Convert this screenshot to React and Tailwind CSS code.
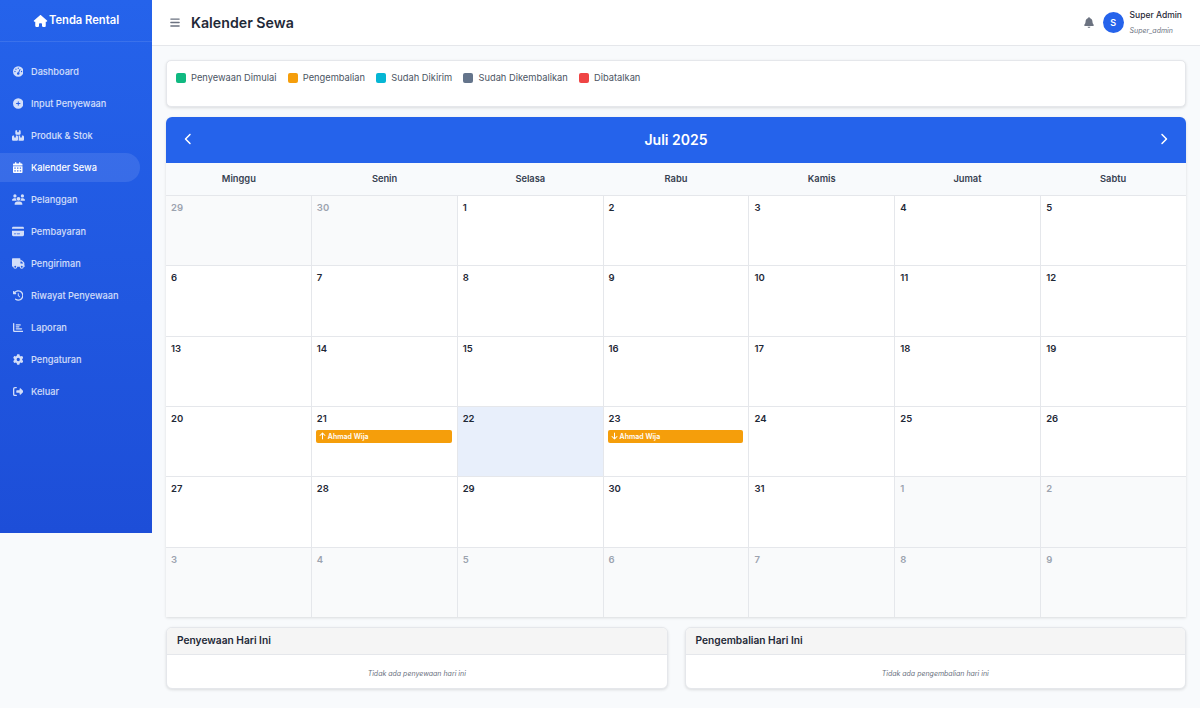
import React from "react";
import { FaHouse, FaGaugeHigh, FaCirclePlus, FaBoxesStacked, FaCalendarDays, FaUsers, FaCreditCard, FaTruck, FaClockRotateLeft, FaChartBar, FaGear, FaRightFromBracket, FaBars, FaBell, FaChevronLeft, FaChevronRight, FaArrowUp, FaArrowDown } from "react-icons/fa6";

const nav = [
  [FaGaugeHigh, "Dashboard", "w-[10.5px]"],
  [FaCirclePlus, "Input Penyewaan", "w-[10.5px]"],
  [FaBoxesStacked, "Produk & Stok", "w-[12px]"],
  [FaCalendarDays, "Kalender Sewa", "w-[9.5px]", true],
  [FaUsers, "Pelanggan", "w-[13px]"],
  [FaCreditCard, "Pembayaran", "w-[12px]"],
  [FaTruck, "Pengiriman", "w-[13px]"],
  [FaClockRotateLeft, "Riwayat Penyewaan", "w-[10.5px]"],
  [FaChartBar, "Laporan", "w-[10.5px]"],
  [FaGear, "Pengaturan", "w-[10.5px]"],
  [FaRightFromBracket, "Keluar", "w-[10.5px]"],
];

const legend = [
  ["bg-[#10b981]", "Penyewaan Dimulai"],
  ["bg-[#f59e0b]", "Pengembalian"],
  ["bg-[#06b6d4]", "Sudah Dikirim"],
  ["bg-[#64748b]", "Sudah Dikembalikan"],
  ["bg-[#ef4444]", "Dibatalkan"],
];

const days = ["Minggu", "Senin", "Selasa", "Rabu", "Kamis", "Jumat", "Sabtu"];

const cells = [
  ...[29, 30].map((d) => ({ d, other: true })),
  ...Array.from({ length: 31 }, (_, i) => ({ d: i + 1 })),
  ...Array.from({ length: 9 }, (_, i) => ({ d: i + 1, other: true })),
];

function Event({ Icon, label }) {
  return (
    <div className="mt-[4px] -ml-[0.5px] h-[13px] rounded-[2px] bg-[#f59e0b] flex items-center pl-[3px] gap-[1.5px] text-white text-[7px] font-semibold leading-none">
      <Icon className="w-[7px] h-[8px]" />
      <span>{label}</span>
    </div>
  );
}

function Today({ title, empty }) {
  return (
    <div className="flex-1 h-[62px] bg-white rounded-[6px] border border-[#e5e7eb] shadow-[0_1px_3px_rgba(0,0,0,0.12)] overflow-hidden">
      <div className="h-[27px] bg-[#f5f5f5] border-b border-[#e5e7eb] pl-[10px] flex items-center text-[10.2px] font-semibold text-[#1f2937]">{title}</div>
      <div className="h-[34px] pt-[4px] flex items-center justify-center text-[7px] italic text-[#6b7280]">{empty}</div>
    </div>
  );
}

export default function App() {
  return (
    <div className="flex items-start h-[708px] w-[1200px] overflow-hidden bg-[#f8fafc] font-['Inter',sans-serif]">
      <aside className="w-[152px] h-[533px] shrink-0 bg-gradient-to-b from-[#2563eb] to-[#1d4ed8] text-white">
        <div className="h-[42px] flex items-center justify-center gap-[1px] border-b border-white/10 text-[11.2px] font-semibold">
          <FaHouse className="w-[15px] h-[12px]" />
          <span>Tenda Rental</span>
        </div>
        <nav className="pt-[15px] pr-[12px] flex flex-col">
          {nav.map(([Icon, label, w, active]) => (
            <div key={label} className={`h-[29px] mb-[3px] rounded-r-[15px] pl-[11px] flex items-center gap-[6px] text-[9.2px] font-medium ${active ? "bg-white/10 text-white" : "text-white/80"}`}>
              <span className="w-[14px] flex justify-center"><Icon className={`h-[11px] ${w}`} /></span>
              <span>{label}</span>
            </div>
          ))}
        </nav>
      </aside>
      <main className="flex-1 min-w-0">
        <header className="h-[46px] bg-white border-b border-[#e5e7eb] pl-[18px] pr-[18px] flex items-center">
          <FaBars className="w-[10px] h-[11px] text-[#6b7280]" />
          <h1 className="ml-[11px] text-[14.2px] font-semibold text-[#1f2937]">Kalender Sewa</h1>
          <div className="ml-auto flex items-center">
            <FaBell className="w-[10px] h-[11px] text-[#6b7280]" />
            <div className="ml-[9px] w-[21px] h-[21px] rounded-full bg-[#2563eb] text-white text-[9px] font-semibold flex items-center justify-center">S</div>
            <div className="ml-[6px] flex flex-col">
              <span className="text-[8.5px] font-medium leading-[12px] text-[#1f2937]">Super Admin</span>
              <span className="mt-[5px] text-[7px] italic leading-[10px] text-[#6b7280]">Super_admin</span>
            </div>
          </div>
        </header>
        <div className="px-[14px] pt-[14px]">
          <div className="h-[47px] bg-white rounded-[5px] border border-[#e5e7eb] shadow-[0_1px_3px_rgba(0,0,0,0.12)] pl-[9px] pt-[10px] flex items-start gap-[11.3px]">
            {legend.map(([c, l]) => (
              <div key={l} className="flex items-center gap-[5px] h-[13px] text-[9.3px] text-[#4b5563]">
                <span className={`w-[10px] h-[10px] rounded-[2px] ${c}`} />
                <span>{l}</span>
              </div>
            ))}
          </div>
          <div className="mt-[10px] rounded-t-[6px] shadow-[0_1px_3px_rgba(0,0,0,0.12)]">
            <div className="h-[46px] pb-[2px] bg-[#2563eb] rounded-t-[6px] px-[18px] flex items-center justify-between text-white">
              <FaChevronLeft className="w-[9px] h-[12px]" />
              <span className="text-[14px] font-semibold">Juli 2025</span>
              <FaChevronRight className="w-[9px] h-[12px]" />
            </div>
            <div className="grid grid-cols-7 h-[33px] bg-[#f8fafc] border-b border-[#e5e7eb]">
              {days.map((d) => (
                <div key={d} className="flex items-center justify-center text-[9.3px] font-semibold text-[#374151]">{d}</div>
              ))}
            </div>
            <div className="grid grid-cols-7 gap-px auto-rows-[69.33px] bg-[#e5e7eb]">
              {cells.map((c, i) => (
                <div key={i} className={`p-[5px] ${c.other ? "bg-[#f9fafb]" : i === 23 ? "bg-[#e8effb]" : "bg-white"}`}>
                  <div className={`text-[9.5px] leading-[14px] font-semibold ${c.other ? "text-[#9ca3af]" : "text-[#1f2937]"}`}>{c.d}</div>
                  {i === 22 && <Event Icon={FaArrowUp} label="Ahmad Wija" />}
                  {i === 24 && <Event Icon={FaArrowDown} label="Ahmad Wija" />}
                </div>
              ))}
            </div>
          </div>
          <div className="mt-[10px] flex gap-[17px]">
            <Today title="Penyewaan Hari Ini" empty="Tidak ada penyewaan hari ini" />
            <Today title="Pengembalian Hari Ini" empty="Tidak ada pengembalian hari ini" />
          </div>
        </div>
      </main>
    </div>
  );
}
